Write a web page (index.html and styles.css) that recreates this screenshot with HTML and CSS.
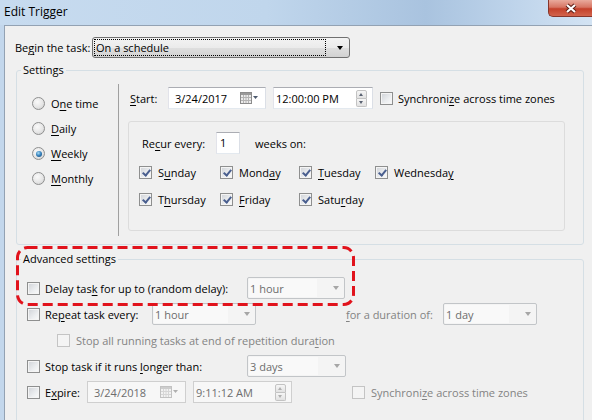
FILE: index.html
```html
<!DOCTYPE html>
<html lang="en">
<head>
    <meta charset="UTF-8">
    <meta name="viewport" content="width=device-width, initial-scale=1.0">
    <title>Edit Trigger</title>
    <link rel="stylesheet" href="styles.css">
</head>
<body>
    <div class="window">
        <div class="titlebar">
            <span class="title">Edit Trigger</span>
            <div class="close-btn">
                <svg width="14" height="11" viewBox="0 0 14 11">
                    <path d="M3 2 L11 9 M11 2 L3 9" stroke="#5b1d14" stroke-width="4.2"/>
                    <path d="M3 2 L11 9 M11 2 L3 9" stroke="#fff" stroke-width="2.2"/>
                </svg>
            </div>
        </div>

        <div class="content">
            <div class="begin-row">
                <span class="begin-label">Be<u>g</u>in the task:</span>
                <div class="combo">
                    <span class="combo-text">On a schedule</span>
                    <span class="arrow"></span>
                </div>
            </div>

            <fieldset class="group">
                <legend>Settings</legend>
                <div class="settings-body">
                    <div class="radios">
                        <div class="radio-row"><span class="radio"></span>O<u>n</u>e time</div>
                        <div class="radio-row"><span class="radio"></span><u>D</u>aily</div>
                        <div class="radio-row"><span class="radio checked"></span><u>W</u>eekly</div>
                        <div class="radio-row"><span class="radio"></span><u>M</u>onthly</div>
                    </div>
                    <div class="vsep"></div>
                    <div class="schedule">
                        <div class="start-row">
                            <span class="start-label"><u>S</u>tart:</span>
                            <div class="field date">
                                <span>3/24/2017</span>
                                <svg class="cal" width="18" height="12" viewBox="0 0 18 12">
                                    <rect x="0.5" y="0.5" width="11" height="11" fill="#ececec" stroke="#8c8c8c"/>
                                    <rect x="1" y="1" width="10" height="2" fill="#9a9a9a"/>
                                    <path d="M1 5.5 H11 M1 8.5 H11 M3.5 3 V11 M6 3 V11 M8.5 3 V11" stroke="#b4b4b4"/>
                                    <path d="M13 4 L18 4 L15.5 7 Z" fill="#4e5a6e"/>
                                </svg>
                            </div>
                            <div class="field time">
                                <span>12:00:00 PM</span>
                                <span class="spin"><span class="spin-up"></span><span class="spin-down"></span></span>
                            </div>
                            <span class="cb"></span>
                            <span class="cb-text">Synchroni<u>z</u>e across time zones</span>
                        </div>

                        <div class="recur-box">
                            <div class="recur-row">
                                <span class="recur-label">Re<u>c</u>ur every:</span>
                                <div class="field num">1</div>
                                <span class="weeks">weeks on:</span>
                            </div>
                            <div class="days">
                                <div class="day"><span class="cb checked"></span>S<u>u</u>nday</div>
                                <div class="day"><span class="cb checked"></span>Mond<u>a</u>y</div>
                                <div class="day"><span class="cb checked"></span><u>T</u>uesday</div>
                                <div class="day"><span class="cb checked"></span>Wednesda<u>y</u></div>
                                <div class="day"><span class="cb checked"></span>T<u>h</u>ursday</div>
                                <div class="day"><span class="cb checked"></span><u>F</u>riday</div>
                                <div class="day"><span class="cb checked"></span>Satu<u>r</u>day</div>
                            </div>
                        </div>
                    </div>
                </div>
            </fieldset>

            <fieldset class="group advanced">
                <legend>Advanced settings</legend>
                <div class="adv-body">
                    <div class="adv-row">
                        <span class="cb"></span>
                        <span class="adv-label w202">Delay tas<u>k</u> for up to (random delay):</span>
                        <div class="select w98"><span class="select-text">1 hour</span><span class="arrow"></span></div>
                    </div>
                    <div class="adv-row">
                        <span class="cb"></span>
                        <span class="adv-label w107">Re<u>p</u>eat task every:</span>
                        <div class="select w104"><span class="select-text">1 hour</span><span class="arrow"></span></div>
                        <span class="adv-label dim duration"><u>f</u>or a duration of:</span>
                        <div class="select w94"><span class="select-text">1 day</span><span class="arrow"></span></div>
                    </div>
                    <div class="adv-row sub">
                        <span class="cb off"></span>
                        <span class="dim">Stop all running tasks at end of repetition dura<u>t</u>ion</span>
                    </div>
                    <div class="adv-row">
                        <span class="cb"></span>
                        <span class="adv-label w202">Stop task if it runs <u>l</u>onger than:</span>
                        <div class="select w99"><span class="select-text">3 days</span><span class="arrow"></span></div>
                    </div>
                    <div class="adv-row">
                        <span class="cb"></span>
                        <span class="adv-label w42">E<u>x</u>pire:</span>
                        <div class="field date off">
                            <span>3/24/2018</span>
                            <svg class="cal" width="18" height="12" viewBox="0 0 18 12">
                                <rect x="0.5" y="0.5" width="11" height="11" fill="#f2f2f2" stroke="#c2c2c2"/>
                                <rect x="1" y="1" width="10" height="2" fill="#cdcdcd"/>
                                <path d="M1 5.5 H11 M1 8.5 H11 M3.5 3 V11 M6 3 V11 M8.5 3 V11" stroke="#d6d6d6"/>
                                <path d="M13 4 L18 4 L15.5 7 Z" fill="#b0b0b0"/>
                            </svg>
                        </div>
                        <div class="field time off">
                            <span>9:11:12 AM</span>
                            <span class="spin"><span class="spin-up"></span><span class="spin-down"></span></span>
                        </div>
                        <span class="cb off sync"></span>
                        <span class="dim">Synchroni<u>z</u>e across time zones</span>
                    </div>
                </div>
            </fieldset>
        </div>

        <svg class="annotation" width="340" height="62" viewBox="0 0 340 62">
            <rect x="1.5" y="1.5" width="336" height="57" rx="10" fill="none" stroke="#e1131c" stroke-width="3" stroke-dasharray="10 5"/>
        </svg>
    </div>
</body>
</html>
```

FILE: styles.css
```css
body { margin: 0; padding: 0; font-family: "Open Sans", "Noto Sans", Arial, sans-serif; font-size: 11px; color: #000; white-space: nowrap; }
u { text-decoration: underline; text-underline-offset: 2px; }

.window { position: relative; width: 592px; height: 420px; overflow: hidden; background: #c3d7ec; }

/* title bar */
.titlebar {
    height: 25px;
    display: flex;
    align-items: flex-start;
    background: linear-gradient(to right, #c7dbef 0%, #c0d6ec 45%, #a9c3df 72%, #bdd3ea 86%, #d3e3f3 100%);
}
.title { padding: 4px 0 0 4px; line-height: 16px; font-size: 12px; }
.close-btn {
    margin-left: auto;
    width: 44px;
    height: 17px;
    display: flex;
    align-items: center;
    justify-content: center;
    box-sizing: border-box;
    border: 1px solid #86352a;
    border-top: none;
    border-right: none;
    border-radius: 0 0 0 5px;
    background: linear-gradient(to bottom, #e9aa9c 0%, #d77563 45%, #c4412b 55%, #d2644c 100%);
}

.content {
    height: 395px;
    margin-left: 4px;
    box-sizing: border-box;
    border-top: 1px solid #93a2b3;
    border-left: 1px solid #93a2b3;
    background: #f0f0f0;
    padding: 11px 8px 0 11px;
}

/* begin the task */
.begin-row { display: flex; align-items: center; height: 21px; margin-left: -1px; }
.begin-label { width: 77px; }
.combo {
    width: 258px;
    height: 21px;
    box-sizing: border-box;
    display: flex;
    align-items: center;
    border: 1px solid #707070;
    border-radius: 3px;
    background: linear-gradient(to bottom, #f3f3f3 0%, #ebebeb 50%, #dfdfdf 51%, #d2d2d2 100%);
}
.combo-text { flex: 1; margin: 1px 12px 1px 2px; padding-left: 1px; line-height: 15px; outline: 1px dotted #000; }
.arrow { width: 0; height: 0; margin-right: 6px; border-left: 3.5px solid transparent; border-right: 3.5px solid transparent; border-top: 4px solid #000; }

/* group boxes */
.group { margin: 4px 0 0 0; padding: 0; border: 1px solid #d5dfe5; border-radius: 3px; min-width: 0; }
.group legend { margin-left: 4px; padding: 0 2px; line-height: 16px; }
.settings-body { display: flex; height: 152px; padding: 6px 0 8px 0; }
.radios { width: 86px; padding: 7px 0 0 15px; }
.radio-row { display: flex; align-items: center; height: 25px; }
.radio {
    width: 13px;
    height: 13px;
    box-sizing: border-box;
    margin-right: 6px;
    border: 1px solid #8e8f8f;
    border-radius: 50%;
    background: radial-gradient(circle at 40% 35%, #fafafa 0%, #e6e6e6 55%, #c9c9c9 100%);
    position: relative;
}
.radio.checked::after {
    content: "";
    position: absolute;
    left: 2.5px;
    top: 2.5px;
    width: 6px;
    height: 6px;
    border-radius: 50%;
    background: radial-gradient(circle at 40% 35%, #a8dcf5 0%, #3b86c0 45%, #0d3f6e 100%);
}
.vsep { width: 1px; background: #a0a0a0; }

.schedule { flex: 1; padding: 3px 18px 0 9px; }
.start-row { display: flex; align-items: center; height: 22px; padding-left: 2px; }
.start-label { width: 38px; }

.field {
    height: 22px;
    box-sizing: border-box;
    display: flex;
    align-items: center;
    background: #fff;
    border: 1px solid;
    border-color: #abadb3 #dbdfe6 #e3e9ef #e2e3ea;
}
.field.date { width: 98px; padding: 0 7px 0 6px; justify-content: space-between; }
.field.time { width: 100px; margin-left: 7px; padding: 0 5px 0 2px; justify-content: space-between; }
.field.off { background: #f7f7f7; border-color: #cfcfcf; color: #6d6d6d; }
.field.num { width: 24px; padding: 0 0 2px 3px; }
.cal { display: block; }
.spin { display: flex; flex-direction: column; width: 11px; height: 17px; }
.spin span { flex: 1; border: 1px solid #c3c3c3; background: linear-gradient(#f6f6f6, #e2e2e2); position: relative; }
.spin .spin-up { border-radius: 2px 2px 0 0; }
.spin .spin-down { border-top: none; border-radius: 0 0 2px 2px; }
.spin span::after { content: ""; position: absolute; left: 2px; top: 2px; border-left: 2.5px solid transparent; border-right: 2.5px solid transparent; }
.spin .spin-up::after { border-bottom: 3px solid #5a6272; }
.spin .spin-down::after { border-top: 3px solid #5a6272; top: 2px; }
.off .spin span::after { border-bottom-color: #b0b0b0; border-top-color: #b0b0b0; }

/* checkboxes */
.cb {
    width: 13px;
    height: 13px;
    flex: none;
    box-sizing: border-box;
    margin-right: 6px;
    border: 1px solid #8e8f8f;
    background: linear-gradient(135deg, #cfd2d7 0%, #eceef0 60%, #fbfbfb 100%);
    box-shadow: inset 0 0 0 1px #f4f4f4;
    position: relative;
}
.cb.checked::after {
    content: "";
    position: absolute;
    left: 3.5px;
    top: 1px;
    width: 3px;
    height: 6px;
    border-right: 2px solid #4a5f8f;
    border-bottom: 2px solid #4a5f8f;
    transform: rotate(40deg);
}
.cb.off { border-color: #c4c4c4; background: #f4f4f4; box-shadow: none; }
.start-row .cb { margin-left: 7px; margin-right: 5px; }

.recur-box {
    margin-top: 12px;
    margin-left: 0;
    height: 110px;
    box-sizing: border-box;
    border: 1px solid #dcdcdc;
    border-radius: 3px;
    padding: 10px 0 0 10px;
}
.recur-row { display: flex; align-items: center; height: 22px; padding-left: 3px; }
.recur-label { width: 74px; }
.weeks { margin-left: 15px; }
.days { display: grid; grid-template-columns: 81px 79px 76px auto; grid-auto-rows: 27px; margin-top: 5px; }
.day { display: flex; align-items: center; }

/* advanced */
.advanced { margin-top: 6px; height: 200px; }
.adv-body { padding: 8px 0 0 10px; }
.adv-row { display: flex; align-items: center; height: 26px; }
.adv-row .cb { margin-right: 5px; }
.adv-row.sub { padding-left: 30px; }
.adv-row.sub .cb { margin-right: 6px; }
.adv-label { flex: none; }
.w202 { width: 202px; }
.w107 { width: 107px; }
.w42 { width: 42px; }
.duration { width: 97px; margin-left: 90px; }
.dim { color: #838383; }
.adv-row .field.time { width: 99px; }
.adv-row .field.date { width: 99px; }
.adv-row .sync { margin-left: 60px; margin-right: 6px; }

.select {
    height: 22px;
    box-sizing: border-box;
    display: flex;
    align-items: center;
    border: 1px solid #c2c5c8;
    border-radius: 2px;
    background: #f4f4f4;
    color: #6d6d6d;
}
.select-text { flex: 1; align-self: stretch; display: flex; align-items: center; margin: 1px 16px 1px 1px; padding-left: 1px; background: #f9f9f9; }
.select .arrow { border-top-color: #a6a6a6; margin-right: 5px; }
.w98 { width: 98px; }
.w99 { width: 99px; }
.w104 { width: 104px; }
.w94 { width: 94px; }

/* red highlight drawn over the dialog */
.annotation { position: absolute; left: 16px; top: 246px; }
```
